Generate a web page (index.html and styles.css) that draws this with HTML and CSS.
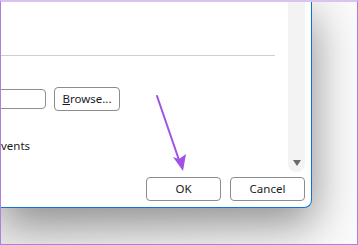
FILE: index.html
```html
<!DOCTYPE html>
<html>
<head>
<meta charset="utf-8">
<link rel="stylesheet" href="styles.css">
</head>
<body>
<div class="frame">
  <div class="dialog">
    <div class="pane">
      <div class="content">
        <div class="separator"></div>
        <div class="path-row">
          <div class="path-input"></div>
          <button class="btn browse"><u>B</u>rowse...</button>
        </div>
        <div class="option">vents</div>
      </div>
      <div class="scrollbar"><span class="scroll-down"></span></div>
    </div>
    <div class="footer">
      <button class="btn action">OK</button>
      <button class="btn action">Cancel</button>
    </div>
  </div>
  <svg class="pointer" width="358" height="245" viewBox="0 0 358 245">
    <line x1="157" y1="96" x2="179" y2="160" stroke="#a052e6" stroke-width="2" stroke-linecap="round"/>
    <polygon points="183,171 173,157 179,159 186,154" fill="#a052e6"/>
  </svg>
</div>
</body>
</html>
```
FILE: styles.css
```css
html, body {
  margin: 0;
  padding: 0;
}
body {
  width: 358px;
  height: 245px;
  overflow: hidden;
  font-family: "Noto Sans", "Open Sans", sans-serif;
  font-size: 11.5px;
  color: #1b1b1b;
}
.frame {
  position: relative;
  box-sizing: border-box;
  width: 358px;
  height: 245px;
  border-top: 2px solid #dcc2f1;
  border-left: 1px solid #b07de8;
  border-right: 1px solid #b07de8;
  border-bottom: 1px solid #b07de8;
  background: linear-gradient(90deg, #ececec 0%, #fafafa 100%);
  overflow: hidden;
}
.dialog {
  box-sizing: border-box;
  width: 311px;
  height: 206px;
  background: #fff;
  border-right: 1px solid #0b74d6;
  border-bottom: 1px solid #0b74d6;
  border-bottom-right-radius: 8px;
  display: flex;
  flex-direction: column;
  box-shadow: 2px 16px 44px rgba(0, 0, 0, 0.42);
  position: relative;
  z-index: 1;
}
.pane {
  display: flex;
  height: 170px;
}
.content {
  flex: 1;
  min-width: 0;
  padding-right: 13px;
  display: flex;
  flex-direction: column;
}
.separator {
  margin-top: 53px;
  height: 1px;
  background: #cfcfcf;
}
.path-row {
  margin-top: 31px;
  margin-left: -40px;
  display: flex;
  align-items: center;
  gap: 8px;
}
.path-input {
  box-sizing: border-box;
  width: 85px;
  height: 20px;
  border: 1px solid #8f8f8f;
  border-radius: 4px;
}
.btn {
  box-sizing: border-box;
  height: 24px;
  padding: 0;
  background: #fff;
  border: 1px solid #8c8c8c;
  border-radius: 4px;
  font-family: inherit;
  font-size: inherit;
  color: #1b1b1b;
  line-height: 20px;
}
.browse {
  width: 66px;
}
.option {
  margin-top: 27px;
  line-height: 16px;
}
.scrollbar {
  width: 17px;
  margin-right: 6px;
  background: #f3f3f3;
  border-bottom-left-radius: 8px;
  border-bottom-right-radius: 8px;
  display: flex;
  justify-content: center;
  align-items: flex-end;
  padding-bottom: 6px;
  box-sizing: border-box;
}
.scroll-down {
  width: 0;
  height: 0;
  border-left: 4px solid transparent;
  border-right: 4px solid transparent;
  border-top: 6px solid #6a6a6a;
}
.footer {
  display: flex;
  justify-content: flex-end;
  gap: 9px;
  padding-top: 5px;
  padding-right: 6px;
}
.action {
  width: 75px;
}
.pointer {
  position: absolute;
  left: -1px;
  top: -2px;
  z-index: 2;
}
```
